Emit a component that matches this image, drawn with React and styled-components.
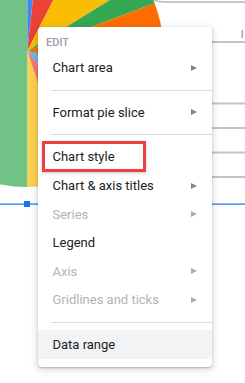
import React from 'react';
import styled, { createGlobalStyle } from 'styled-components';

const Global = createGlobalStyle`
  html, body { margin: 0; padding: 0; background: #fff; }
  body { width: 245px; height: 383px; overflow: hidden; font-family: Roboto, Arial, sans-serif; }
`;

const Stage = styled.div`
  position: relative;
  width: 245px;
  height: 383px;
  overflow: hidden;
  background: #fff;
`;

const ChartCanvas = styled.svg`
  display: block;
  width: 245px;
  height: 383px;
`;

const Menu = styled.div`
  position: absolute;
  left: 38px;
  top: 27px;
  width: 174px;
  box-sizing: border-box;
  padding: 0 0 7.7px;
  display: flex;
  flex-direction: column;
  background: #fff;
  border-radius: 4px;
  box-shadow: 0 1px 2px rgba(60, 64, 67, 0.3), 0 2px 6px 2px rgba(60, 64, 67, 0.15);
  font-family: Roboto, Arial, sans-serif;
`;

const Header = styled.div`
  height: 26.5px;
  box-sizing: border-box;
  padding: 9px 0 0 8px;
  font-size: 11px;
  line-height: 13px;
  font-weight: 500;
  color: #9aa0a6;
`;

const Item = styled.div`
  position: relative;
  height: 28.6px;
  flex: none;
  box-sizing: border-box;
  padding: 0 15px 0 14.5px;
  display: flex;
  align-items: center;
  justify-content: space-between;
  font-size: 13px;
  color: ${(p) => (p.$disabled ? '#b1b4b8' : '#202124')};
  background: ${(p) => (p.$active ? '#f1f3f4' : 'transparent')};
  white-space: nowrap;
`;

const Arrow = styled.span`
  width: 0;
  height: 0;
  border-left: 6px solid ${(p) => (p.$disabled ? '#a9acb0' : '#80868b')};
  border-top: 3.5px solid transparent;
  border-bottom: 3.5px solid transparent;
`;

const Separator = styled.div`
  height: 1px;
  flex: none;
  margin: 7.5px 0 7.5px 13px;
  background: #dadce0;
`;

const Callout = styled.span`
  position: absolute;
  left: 4.3px;
  top: -1.7px;
  width: 103.7px;
  height: 31px;
  box-sizing: border-box;
  border: 3px solid #ea4040;
  box-shadow: 0 1px 3px rgba(0, 0, 0, 0.22);
  pointer-events: none;
`;

const slices = [
  { to: 6.2, color: '#4285f4' },
  { to: 27, color: '#ea4335' },
  { to: 58.3, color: '#fbbc04' },
  { to: 69.5, color: '#34a853' },
  { to: 101.5, color: '#ff6d01' },
  { to: 118, color: '#46bdc6' },
  { to: 141.6, color: '#7baaf7' },
  { to: 162, color: '#f07b72' },
  { to: 180, color: '#fcd04f' },
  { to: 360, color: '#71c287' },
];

function Pie({ cx, cy, r }) {
  let from = 0;
  const pt = (a) => {
    const rad = (a * Math.PI) / 180;
    return [cx + r * Math.sin(rad), cy - r * Math.cos(rad)];
  };
  return (
    <g>
      {slices.map((s) => {
        const [x1, y1] = pt(from);
        const [x2, y2] = pt(s.to);
        const large = s.to - from > 180 ? 1 : 0;
        const d = `M${cx} ${cy} L${x1} ${y1} A${r} ${r} 0 ${large} 1 ${x2} ${y2} Z`;
        from = s.to;
        return <path key={s.color} d={d} fill={s.color} />;
      })}
    </g>
  );
}

const gridYs = [102.5, 127, 151.5, 176];

function Item2({ label, disabled, sub, active, marked }) {
  return (
    <Item $disabled={disabled} $active={active}>
      <span>{label}</span>
      {sub && <Arrow $disabled={disabled} />}
      {marked && <Callout />}
    </Item>
  );
}

export default function App() {
  return (
    <Stage>
      <Global />
      <ChartCanvas viewBox="0 0 245 383">
        <path d="M152 -1 Q157 2 166 2 L246 2" fill="none" stroke="#b5b5b5" strokeWidth="1.3" />
        <Pie cx={27.3} cy={51} r={136} />
        <rect x="150" y="41" width="95" height="2" fill="#c4c4c4" />
        <rect x="241.5" y="30" width="1.6" height="8" fill="#a8a8a8" />
        {gridYs.map((y) => (
          <rect key={y} x="150" y={y} width="95" height="2" fill="#c4c4c4" />
        ))}
        <rect x="0" y="203.5" width="245" height="1.2" fill="#1a73e8" />
        <rect x="24" y="201" width="6" height="6" fill="#1a73e8" />
      </ChartCanvas>
      <Menu>
        <Header>EDIT</Header>
        <Item2 label="Chart area" sub />
        <Separator />
        <Item2 label="Format pie slice" sub />
        <Separator />
        <Item2 label="Chart style" marked />
        <Item2 label="Chart & axis titles" sub />
        <Item2 label="Series" sub disabled />
        <Item2 label="Legend" />
        <Item2 label="Axis" sub disabled />
        <Item2 label="Gridlines and ticks" sub disabled />
        <Separator />
        <Item2 label="Data range" active />
      </Menu>
    </Stage>
  );
}
